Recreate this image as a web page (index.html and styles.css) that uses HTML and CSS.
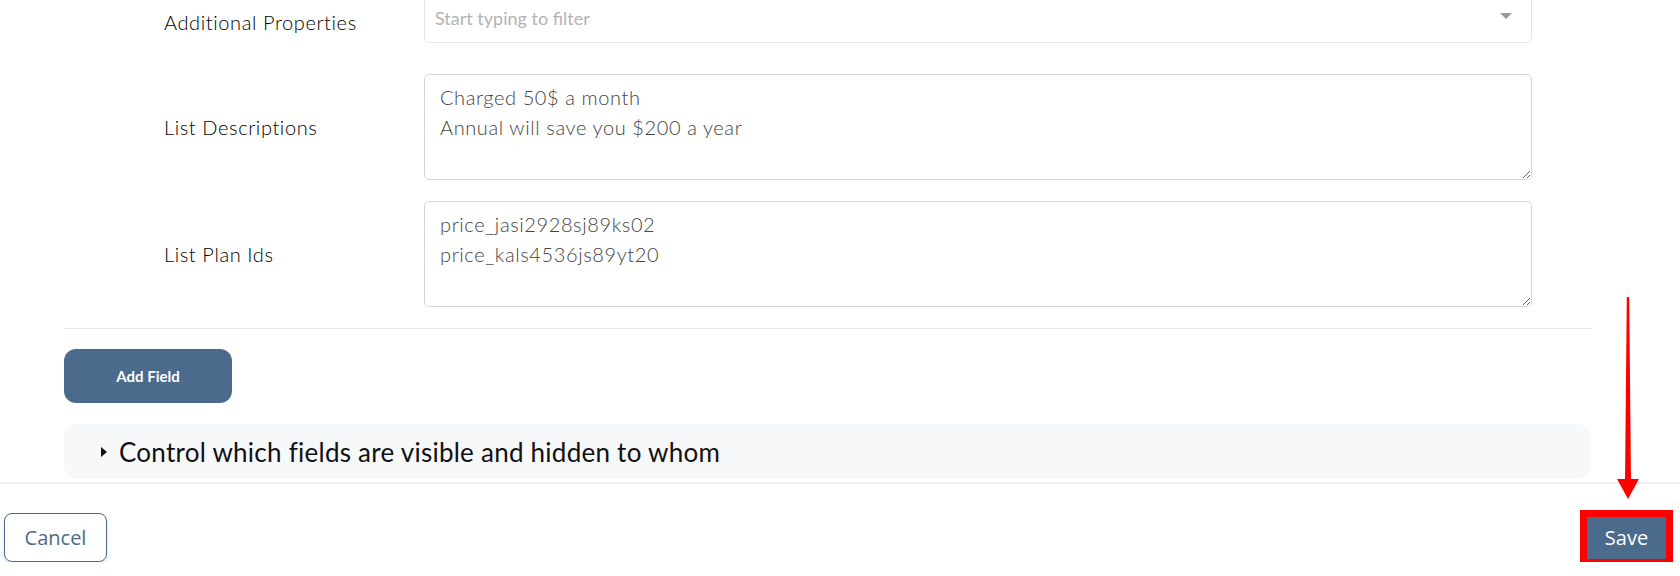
FILE: index.html
```html
<!DOCTYPE html>
<html lang="en">
<head>
<meta charset="UTF-8">
<meta name="viewport" content="width=device-width, initial-scale=1.0">
<title>Edit Form</title>
<link rel="stylesheet" href="styles.css">
</head>
<body>
    <div id="form">
        <div class="field field-select">
            <label>Additional Properties</label>
            <div class="select">
                <input type="text" placeholder="Start typing to filter">
                <span class="caret"></span>
            </div>
        </div>
        <div class="field">
            <label>List Descriptions</label>
            <textarea>Charged 50$ a month
Annual will save you $200 a year</textarea>
        </div>
        <div class="field">
            <label>List Plan Ids</label>
            <textarea>price_jasi2928sj89ks02
price_kals4536js89yt20</textarea>
        </div>
        <hr>
        <button class="add-field">Add Field</button>
        <details class="visibility">
            <summary>Control which fields are visible and hidden to whom</summary>
        </details>
    </div>

    <footer>
        <button class="cancel">Cancel</button>
        <button class="save">Save</button>
    </footer>

    <!-- annotation arrow pointing at Save -->
    <svg class="arrow" width="26" height="206" viewBox="0 0 26 206">
        <polygon points="11.8,2 14.2,2 16,187 10,187" fill="#ff0000"/>
        <polygon points="2,184 24,184 13,204" fill="#ff0000"/>
    </svg>
</body>
</html>
```

FILE: styles.css
```css
:root {
    --primary: #4b6a8c;
    --label-color: #000;
    --text-color: #444;
    --border: #d3d6db;
    --panel-bg: #f7f8fa;
}
body {
    margin: 0;
    background: white;
    font-family: Lato, "Noto Sans", sans-serif;
    overflow: hidden;
}
#form {
    margin-top: -6px;
    padding: 0 89px 0 64px;
}
.field {
    display: grid;
    grid-template-columns: 260px 1fr;
    align-items: center;
    padding: 0 59px 0 100px;
    margin-bottom: 21px;
}
.field-select {
    margin-bottom: 31px;
}
.field-select label {
    padding-top: 7px;
}
label {
    font-size: 20px;
    font-weight: 300;
    letter-spacing: 0.6px;
    color: var(--label-color);
}
.select {
    position: relative;
    height: 49px;
    box-sizing: border-box;
    border: 1px solid #e4e6e9;
    border-radius: 5px;
}
.select input {
    width: 100%;
    box-sizing: border-box;
    border: none;
    outline: none;
    background: transparent;
    font-family: inherit;
    font-size: 18px;
    line-height: 22px;
    padding: 12px 40px 0 10px;
}
.select input::placeholder {
    color: #b3b3b3;
}
.caret {
    position: absolute;
    right: 19px;
    top: 18px;
    width: 0;
    height: 0;
    border-left: 6px solid transparent;
    border-right: 6px solid transparent;
    border-top: 6px solid #999;
}
textarea {
    display: block;
    width: 100%;
    height: 106px;
    box-sizing: border-box;
    padding: 7px 15px;
    border: 1px solid var(--border);
    border-radius: 5px;
    font-family: inherit;
    font-size: 20px;
    font-weight: 300;
    letter-spacing: 0.6px;
    line-height: 30px;
    color: var(--text-color);
    resize: vertical;
}
hr {
    border: none;
    border-top: 1px solid #e5e5e5;
    margin: 0 0 20px;
}
.add-field {
    display: block;
    width: 168px;
    height: 54px;
    background: var(--primary);
    color: white;
    border: none;
    border-radius: 12px;
    font-family: inherit;
    font-size: 15px;
    font-weight: bold;
    cursor: pointer;
}
.visibility {
    margin: 21px 0 3px;
    background: var(--panel-bg);
    border-radius: 14px;
}
.visibility summary {
    display: flex;
    align-items: center;
    gap: 12px;
    height: 55px;
    padding-left: 37px;
    list-style: none;
    font-size: 26px;
    letter-spacing: 0.25px;
    color: #111;
    cursor: pointer;
}
.visibility summary::-webkit-details-marker {
    display: none;
}
.visibility summary::before {
    content: "";
    width: 0;
    height: 0;
    border-top: 5px solid transparent;
    border-bottom: 5px solid transparent;
    border-left: 6px solid #111;
}
footer {
    display: flex;
    justify-content: space-between;
    align-items: center;
    border-top: 2px solid #f2f2f2;
    padding: 29px 14px 0 4px;
    font-family: "Open Sans", "Noto Sans", sans-serif;
}
.cancel {
    width: 103px;
    height: 49px;
    background: white;
    color: var(--primary);
    border: 1px solid var(--primary);
    border-radius: 8px;
    box-shadow: 0 2px 4px rgba(0, 0, 0, 0.12);
    font-family: inherit;
    font-size: 20px;
    cursor: pointer;
}
.save {
    width: 79px;
    height: 42px;
    background: var(--primary);
    color: white;
    border: none;
    outline: 7px solid #ff0000;
    font-family: inherit;
    font-size: 20px;
    cursor: pointer;
}
.arrow {
    position: absolute;
    left: 1615px;
    top: 295px;
    pointer-events: none;
}
```
